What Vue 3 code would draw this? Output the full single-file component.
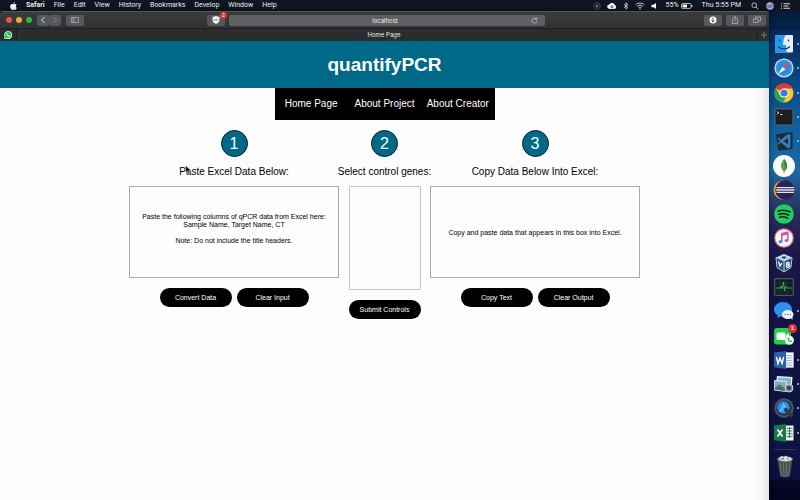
<script setup>
import { ref } from 'vue'

const menus = ['File', 'Edit', 'View', 'History', 'Bookmarks', 'Develop', 'Window', 'Help']
const links = ['Home Page', 'About Project', 'About Creator']
const input = ref(
  'Paste the following columns of qPCR data from Excel here:\nSample Name, Target Name, CT\n\nNote: Do not include the title headers.'
)
const output = ref('Copy and paste data that appears in this box into Excel.')
const controls = ref([])

function copyText() {
  navigator.clipboard?.writeText(output.value)
}
</script>

<template>
  <div class="desktop">
    <header class="menubar">
      <svg class="apple" viewBox="0 0 14 16" aria-hidden="true">
        <path fill="#fff" d="M9.6 0C9.8 1.800 8.500 3.700 6.800 3.800 6.500 2.100 8 .3 9.600 0ZM7 4.700C7.800 4.700 8.600 4 10 4c1.300 0 2.500.7 3.200 1.700-2.500 1.500-2.100 4.900.5 5.900C13 13.600 11.600 16 10.100 16c-1.100 0-1.500-.7-2.900-.7S5.300 16 4.300 16C2.300 16 .3 12.300.3 9 .3 5.900 2.100 4.100 4.200 4.100 5.400 4.100 6.300 4.700 7 4.700Z" />
      </svg>
      <strong>Safari</strong>
      <span v-for="m in menus" :key="m">{{ m }}</span>
      <div class="status">
        <div class="indicators">
          <svg width="8" height="8" viewBox="0 0 16 16"><circle cx="8" cy="8" r="6.500" fill="none" stroke="#555a63" stroke-width="1.500" /><circle cx="8" cy="8" r="3" fill="#6a6f78" /></svg>
          <svg width="10" height="8" viewBox="0 0 20 16"><path fill="#fff" d="M5 14a4.500 4.500 0 0 1-.5-9A6 6 0 0 1 15.500 6 4.200 4.200 0 0 1 15.500 14Z" /><path d="M10 6v5M7.500 9l2.500 2.500L12.500 9" stroke="#151a28" stroke-width="1.600" fill="none" /></svg>
          <svg width="6" height="8" viewBox="0 0 12 16"><path d="M2 4.500 10 11 6 14.500V1.500L10 5 2 11.500" fill="none" stroke="#eee" stroke-width="1.500" /></svg>
          <svg width="10" height="8" viewBox="0 0 20 16"><path d="M1.500 5.500a12 12 0 0 1 17 0M4.500 8.500a8 8 0 0 1 11 0M7.300 11.400a4 4 0 0 1 5.400 0" fill="none" stroke="#ddd" stroke-width="1.800" /><circle cx="10" cy="14" r="1.500" fill="#ddd" /></svg>
          <svg width="6" height="8" viewBox="0 0 12 16"><path d="M1 5.500h4L10 2v12L5 10.500H1Z" fill="#fff" /></svg>
        </div>
        <span class="battery">55%
          <svg width="12" height="8" viewBox="0 0 24 16"><rect x="1" y="3" width="19" height="10" rx="2" fill="none" stroke="#ddd" stroke-width="1.600" /><path d="M3 5h9v6H3Z" fill="#fff" /><path d="M22 6v4" stroke="#ddd" stroke-width="2" /></svg>
        </span>
        <span class="clock">Thu 5:55 PM</span>
        <svg width="8" height="8" viewBox="0 0 16 16"><circle cx="6.500" cy="6.500" r="4.700" fill="none" stroke="#ddd" stroke-width="1.600" /><path d="m10 10 5 5" stroke="#ddd" stroke-width="1.800" /></svg>
        <svg width="8" height="8" viewBox="0 0 16 16"><circle cx="8" cy="8" r="7.500" fill="#aab4d8" /><path d="M1 7c3-5 5 5 8 0s4-2 6 0" stroke="#e04f8c" stroke-width="2.500" fill="none" /><path d="M2 10c3-3 5 3 7 0s4-2 5 0" stroke="#2676e8" stroke-width="2.500" fill="none" /></svg>
        <svg width="9" height="8" viewBox="0 0 18 16"><path d="M0 3.500h2M5 3.500h13M0 8h2M5 8h10M0 12.500h2M5 12.500h13" stroke="#eee" stroke-width="1.800" /></svg>
      </div>
    </header>

    <div class="workspace">
      <div class="window">
        <div class="toolbar">
          <div class="side">
            <i class="light red"></i><i class="light yellow"></i><i class="light green"></i>
            <div class="history">
              <button class="tool" aria-label="Back"><svg width="6" height="8" viewBox="0 0 6 8"><path d="M4.500 1 1.500 4l3 3" fill="none" stroke="#ddd" /></svg></button>
              <button class="tool" aria-label="Forward"><svg width="6" height="8" viewBox="0 0 6 8"><path d="m1.500 1 3 3-3 3" fill="none" stroke="#85878a" /></svg></button>
            </div>
            <button class="tool wide" aria-label="Sidebar"><svg width="8" height="6" viewBox="0 0 16 12"><path d="M1 1h14v10H1ZM6 1v10M2.500 3.500h2M2.500 6h2M2.500 8.500h2" fill="none" stroke="#b5b7ba" stroke-width="1.400" /></svg></button>
          </div>
          <div class="address-group">
            <button class="tool wide shield" aria-label="Blocked content">
              <svg width="8" height="8" viewBox="0 0 16 16"><path d="M8 0 15 2v6c0 4-3 6.500-7 8-4-1.500-7-4-7-8V2Z" fill="#f2f2f2" /><path d="M4 6v3h2V6m2 0v3h2V6m2 0v3" fill="none" stroke="#85888b" stroke-width="1.200" /></svg>
              <span class="count">2</span>
            </button>
            <div class="address">
              localhost
              <svg class="reload" width="7" height="7" viewBox="0 0 14 14"><path d="M11.500 5A5 5 0 1 0 12 8M12 1v4H8" fill="none" stroke="#ccc" stroke-width="1.400" /></svg>
            </div>
          </div>
          <div class="side end">
            <button class="tool wide" aria-label="Downloads"><svg width="8" height="8" viewBox="0 0 16 16"><circle cx="8" cy="8" r="7" fill="#fff" /><path d="M8 3.500V12M5 9l3 3 3-3" fill="none" stroke="#444" stroke-width="1.800" /></svg></button>
            <button class="tool wide" aria-label="Share"><svg width="8" height="8" viewBox="0 0 16 16"><path d="M5 6H3v9h10V6h-2M8 11V1M5 4l3-3 3 3" fill="none" stroke="#bbb" stroke-width="1.500" /></svg></button>
            <button class="tool wide" aria-label="Show tabs"><svg width="8" height="8" viewBox="0 0 16 16"><path d="M1 6h9v7H1ZM5 6V2h10v8h-5" fill="none" stroke="#bbb" stroke-width="1.500" /></svg></button>
          </div>
        </div>

        <div class="tabs">
          <div class="pinned">
            <svg width="8" height="8" viewBox="0 0 16 16"><path d="M0 16 1.200 11.500A8 8 0 1 1 4.500 15Z" fill="#f2fff5" /><path d="m1.800 14.300.9-3.200a6.500 6.500 0 1 1 2.400 2.300Z" fill="#22c258" /><path d="M5 4.200c1-.8 1.500 0 2 1.500-.4.700-.9.900-.3 1.600.8 1.200 1.500 1.600 2.400 2 .6-.2.900-1.300 1.500-1 .9.400 1.700.7 1.500 1.200-.3 1.700-1.900 2-3.400 1.500C6.500 10.200 3.500 7.200 5 4.200Z" fill="#fff" /></svg>
          </div>
          <span class="tab">Home Page</span>
          <button class="newtab" aria-label="New tab"><svg width="6" height="6" viewBox="0 0 6 6"><path d="M3 0v6M0 3h6" stroke="#77797c" /></svg></button>
        </div>

        <div class="page">
          <div class="banner"><h1>quantifyPCR</h1></div>
          <nav>
            <a v-for="l in links" :key="l" href="#">{{ l }}</a>
          </nav>
          <main>
            <section>
              <span class="step">1</span>
              <h2><label for="paste">Paste Excel Data Below:</label></h2>
              <textarea id="paste" v-model="input" class="source" spellcheck="false"></textarea>
              <div class="actions">
                <button class="pill">Convert Data</button>
                <button class="pill" @click="input = ''">Clear Input</button>
              </div>
            </section>
            <section>
              <span class="step">2</span>
              <h2><label for="genes">Select control genes:</label></h2>
              <select id="genes" v-model="controls" multiple></select>
              <div class="actions">
                <button class="pill">Submit Controls</button>
              </div>
            </section>
            <section>
              <span class="step">3</span>
              <h2><label for="result">Copy Data Below Into Excel:</label></h2>
              <textarea id="result" v-model="output" class="result" spellcheck="false"></textarea>
              <div class="actions">
                <button class="pill" @click="copyText">Copy Text</button>
                <button class="pill" @click="output = ''">Clear Output</button>
              </div>
            </section>
          </main>
        </div>
      </div>

      <aside class="dock">
        <ul>
          <li class="running"><svg viewBox="0 0 20 20"><rect x="1" y="1" width="18" height="17.500" rx="1" fill="#e6eef6" /><path d="M1 1h10.500C9.500 4.500 9 8 9 11h3c0 3 .3 5 1 7.500H1Z" fill="#1f9cf0" /><path d="M5.500 5.500v2M14.500 5.500v2" stroke="#12304f" stroke-width="1.200" /><path d="M4 12.500c3.500 3.300 8.500 3.300 12 0" fill="none" stroke="#12304f" stroke-width="1.100" /></svg></li>
          <li class="running"><svg viewBox="0 0 20 20"><circle cx="10" cy="10" r="9.600" fill="#d5dde4" /><circle cx="10" cy="10" r="8.300" fill="#238ee0" /><circle cx="10" cy="10" r="7.200" fill="none" stroke="#a9d8ff" stroke-width="1" stroke-dasharray=".5 1.300" /><path d="m16 4-4.700 7.400-2.600-2.700Z" fill="#f0443c" /><path d="m4 16 4.700-7.300 2.600 2.700Z" fill="#fff" /></svg></li>
          <li class="running"><svg viewBox="0 0 20 20"><circle cx="10" cy="10" r="9.500" fill="#fbc92e" /><path d="M10 10 1.800 5.200A9.500 9.500 0 0 1 18.300 5.500H10Z" fill="#e2392c" /><path d="M1.800 5.200A9.500 9.500 0 0 0 9 19.450L13.500 12 10 10 6.200 12.200Z" fill="#2fa14f" /><circle cx="10" cy="10" r="4.600" fill="#fff" /><circle cx="10" cy="10" r="3.600" fill="#3b7de8" /></svg></li>
          <li class="running"><svg viewBox="0 0 20 20"><rect x="1" y="2" width="18" height="16" rx="1" fill="#1c1e20" stroke="#60676d" /><path d="m3 4.500 2 1.300L3 7.200M6 7.500h2.500" fill="none" stroke="#ddd" stroke-width=".9" /></svg></li>
          <li class="running"><svg viewBox="0 0 20 20"><path d="m2 3.500 10-1.800 6.500-.4V18L5.500 19.500 4 18Z" fill="#222831" /><path d="m14 3 2.500 1v12L14 17.500 7 11.500 4.500 13.500 3.500 12.500 6 10 3.500 7.500 4.500 6.500 7 8.500ZM14 7l-4.500 3 4.500 3.500Z" fill="#2e7fbd" fill-rule="evenodd" /></svg></li>
          <li><svg viewBox="0 0 20 20" overflow="visible"><circle cx="10" cy="10" r="11" fill="#fcfdfa" /><path d="M10 3C14.800 8 13.500 13 10 15.500 6.500 13 5.500 8 10 3Z" fill="#53a94a" /><path d="M10 3C14.800 8 13.500 13 10 15.500Z" fill="#3c8d3d" /><path d="M10 10v7.500" stroke="#a88b62" stroke-width=".9" /></svg></li>
          <li><svg viewBox="0 0 20 20" overflow="visible"><circle cx="9" cy="10" r="9.500" fill="#f29a38" /><circle cx="11" cy="10" r="9.700" fill="#2b2256" /><path d="M2.500 7.700h17.500M2 10h18.500M2.500 12.300h17.500" stroke="#e5e5ee" stroke-width="1.300" /></svg></li>
          <li><svg viewBox="0 0 20 20"><circle cx="10" cy="10" r="9.800" fill="#1fd05e" /><path d="M4.200 7c4-1.300 8.500-.8 12 1M4.800 10.200c3.500-1 7-.6 10 1M5.500 13.200c3-.8 5.500-.5 8.200.9" fill="none" stroke="#0e2417" stroke-width="1.600" stroke-linecap="round" /></svg></li>
          <li><svg viewBox="0 0 20 20"><circle cx="10" cy="10" r="9.800" fill="#f0707c" /><circle cx="10" cy="10" r="8.600" fill="#fdfbff" /><path d="M7.800 13.500V5.500l6-1.300v8" fill="none" stroke="#bc50d8" stroke-width="1.500" /><path d="M7.800 6.800 13.800 5.500" stroke="#f04c68" stroke-width="1.900" /><ellipse cx="6.500" cy="13.700" rx="2" ry="1.600" fill="#3c92f2" /><ellipse cx="12.500" cy="12.500" rx="2" ry="1.600" fill="#ae58df" /></svg></li>
          <li><svg viewBox="0 0 20 20"><path d="m10 1 8 3.500-1 10L10 19l-7-4.500-1-10Z" fill="#264f86" /><path d="m10 1 8 3.500L10 8 2 4.500Z" fill="#d0dce9" /><path d="M10 8v11M2 4.500 3 14.500 10 19l7-4.500 1-10L10 8Z" fill="none" stroke="#b6c8dc" /><path d="m4.500 8.500 1.500 4.500 1.800-3M12.500 9.500v5M12.500 10c3-1.600 3.500 1 1 2 3-.5 2.500 2-.5 2.500" fill="none" stroke="#fff" stroke-width="1.300" /><path d="m7 4.500 3-1.500 3 1.500L10 6Z" fill="#284b7a" /></svg></li>
          <li><svg viewBox="0 0 20 20"><rect x=".7" y="1.700" width="18.600" height="16.600" rx="1" fill="#10201c" stroke="#50565c" stroke-width="1.200" /><path d="M1 6h18M1 14h18M6 2v16M12 2v16" stroke="#24443a" stroke-width=".5" /><path d="M2 11h4l1-2 1 3 1.500-7 1 9 1-5 1 2h5.500" fill="none" stroke="#3fb98d" stroke-width=".8" /></svg></li>
          <li class="running"><svg viewBox="0 0 20 20"><path d="M9 1c5 0 9 3.300 9 7.500S14 16 9 16c-1 0-2-.1-3-.4L2.500 17 4 14.500C1.500 13 0 11 0 8.500 0 4.300 4 1 9 1Z" fill="#2d91f2" /><ellipse cx="13.700" cy="13.500" rx="5.800" ry="4.600" fill="#eaf4ff" /><path d="m16 17 3 1.500-1-3Z" fill="#eaf4ff" /><path d="M11.200 13.500h.1M13.700 13.500h.1M16.200 13.500h.1" stroke="#567aa5" stroke-width="1.400" stroke-linecap="round" /></svg></li>
          <li><svg viewBox="0 0 20 20"><rect x="0" y="2" width="17" height="16.500" rx="3" fill="#21cf45" /><rect x="2.500" y="6.500" width="9" height="7.500" rx="1.500" fill="#fff" /><path d="m12 9.500 3-2.500v6l-3-2.300Z" fill="#fff" /><circle cx="15.400" cy="14.200" r="4.500" fill="#eaffed" /><path d="M13.500 12c0 2 1.500 4 4 4.200l.6-1.200-1.200-.8-.8.600-1.300-1.500.5-.8-.7-1.200Z" fill="#20ad45" /></svg><b class="badge">1</b></li>
          <li class="running"><svg viewBox="0 0 20 20"><path d="M10 2.500h9.500v15H10Z" fill="#f2f5fa" stroke="#b9c7da" stroke-width=".5" /><path d="M12 5.500h6M12 8h6M12 10.500h6M12 13h6M12 15.300h6" stroke="#809bc4" stroke-width=".7" /><path d="M0 2.500 12 1v18L0 17.200Z" fill="#2b5fab" /><path d="m2.500 7 1.500 6.500L6 8l2 5.500L9.700 7" fill="none" stroke="#fff" stroke-width="1.400" /></svg></li>
          <li class="running"><svg viewBox="0 0 20 20"><path d="m3 2 15.500 1-1 13L1 15Z" fill="#f2f2ee" /><path d="m4 3.500 13 .8-.7 10L2.500 13.500Z" fill="#79b5e5" /><path d="m3 9 4-2 4 2 5.500-1-.3 6L2.500 14Z" fill="#b59a6a" /><path d="m.5 6.500 12 1-.8 10L.2 16Z" fill="#7ea9c7" stroke="#fff" stroke-width=".8" /><path d="M1 13.500 6 10.500l3 3 2.800-1.500-.5 5L.800 15.600Z" fill="#4d6e63" /><circle cx="15" cy="14" r="4" fill="#71828e" stroke="#d7dfe5" /><circle cx="15" cy="14" r="1.800" fill="#2c3843" /></svg></li>
          <li class="running"><svg viewBox="0 0 20 20"><circle cx="10" cy="10" r="9.700" fill="#51565d" /><circle cx="10" cy="10" r="7.600" fill="#18283d" /><circle cx="9.500" cy="9.500" r="6.300" fill="#238df4" /><path d="M5 14 9.500 4l4.500 8Z" fill="#61b5ff" /><path d="m10.500 10.500 8 8" stroke="#353b43" stroke-width="3.600" /></svg></li>
          <li class="running"><svg viewBox="0 0 20 20"><path d="M10 2.500h9.500v15H10Z" fill="#f1f7f3" /><path d="M12.500 5.300h6M12.500 8h6M12.500 10.700h6M12.500 13.400h6M15.500 4v11" stroke="#34885b" stroke-width="1" /><path d="M0 2.500 12 1v18L0 17.200Z" fill="#187845" /><path d="m3.500 6.500 5 7M8.500 6.500l-5 7" stroke="#fff" stroke-width="1.700" /></svg></li>
        </ul>
        <div class="trash"><svg viewBox="0 0 20 24"><path d="M2.500 4 5 21c2 1.700 8 1.700 10 0L17.500 4Z" fill="#4c5053" /><path d="m5 7 1.800 14M8.500 8l.5 14M11.700 8l-.5 14M15 7l-1.800 14" stroke="#777d81" stroke-width=".7" /><ellipse cx="10" cy="4" rx="7.800" ry="2.800" fill="#8f9598" /><path d="m4 4 2-3 3 1 2-1.500 2 2 3 .3.500 2c-3 2-9 2-12.500-.8Z" fill="#dcdfe1" /><path d="m6 4 2-1 1 2M12 3l1.500 1.500" stroke="#667178" fill="none" /></svg></div>
      </aside>
    </div>

    <svg class="cursor" viewBox="0 0 8 12" aria-hidden="true"><path d="M.5.5v9l2.200-2 1.600 3.700 1.500-.7-1.600-3.500h3Z" fill="#000" stroke="#fff" stroke-width=".6" /></svg>
  </div>
</template>

<style>
html, body, #app { height: 100%; }
body { margin: 0; }
</style>

<style scoped>
* { box-sizing: border-box; }
svg { display: block; flex: none; }
button { border: 0; padding: 0; font-family: inherit; cursor: pointer; }
.desktop {
  position: relative;
  display: flex;
  flex-direction: column;
  min-height: 100%;
  font-family: "Liberation Sans", Arial, sans-serif;
  background: linear-gradient(#03162f, #05244a 6%, #084a85 16%, #0b68a5 25%, #1a78a8 34%, #25557f 38%, #2b2850 43%, #1f0f3c 51%, #110b36 60%, #0c0932 90%, #040420);
}
.menubar {
  display: flex;
  align-items: center;
  gap: 9px;
  height: 11px;
  padding: 0 10px;
  background: #101522;
  color: #f0f0f2;
  font: 7px/11px Roboto, sans-serif;
}
.apple { width: 7px; height: 8px; }
.status { display: flex; align-items: center; gap: 7px; margin-left: auto; }
.indicators { display: flex; gap: 6px; margin-right: 2px; }
.battery { display: flex; align-items: center; gap: 2px; }
.clock { margin: 0 3px 0 2px; }
.workspace { display: flex; flex: 1; }
.window {
  display: flex;
  flex: 1;
  flex-direction: column;
  min-width: 0;
  border-radius: 3px 3px 0 0;
  overflow: hidden;
  box-shadow: 0 0 6px #0008;
}
.toolbar {
  display: grid;
  grid-template-columns: 201fr 338fr 221fr;
  align-items: center;
  height: 17px;
  padding: 0 3px 0 6px;
  border-top: 1px solid #55575a;
  background: linear-gradient(#393b3d, #303234);
}
.side { display: flex; align-items: center; gap: 4px; }
.end { justify-content: flex-end; }
.light { width: 6px; height: 6px; border-radius: 50%; }
.red { background: #ec5149; }
.yellow { background: #efae32; }
.green { background: #2dbd38; }
.history { display: flex; margin: 0 1px 0 1px; }
.tool {
  display: flex;
  align-items: center;
  justify-content: center;
  width: 12px;
  height: 11px;
  border-radius: 2px;
  background: #56585b;
}
.wide { width: 18px; }
.address-group { display: flex; gap: 4px; }
.shield { position: relative; }
.count {
  position: absolute;
  top: -3px;
  right: -2px;
  width: 7px;
  height: 7px;
  border-radius: 50%;
  background: #e6302d;
  color: #fff;
  font-size: 5px;
  line-height: 7px;
}
.address {
  position: relative;
  flex: 1;
  height: 11px;
  padding-right: 4px;
  border-radius: 2px;
  background: #5d5f62;
  color: #f2f2f2;
  font: 6px/11px Inter, sans-serif;
  text-align: center;
}
.reload { position: absolute; top: 2px; right: 7px; }
.tabs {
  display: flex;
  height: 13px;
  border-top: 1px solid #1d1f21;
  background: #2a2c2e;
  color: #eee;
  font: 6px/12px Inter, sans-serif;
}
.pinned { display: flex; align-items: center; justify-content: center; width: 17px; border-right: 1px solid #1b1c1e; }
.tab { flex: 1; padding-right: 6px; text-align: center; }
.newtab { display: flex; align-items: center; justify-content: center; width: 12px; border-left: 1px solid #1b1c1e; background: none; }
.page {
  display: flex;
  flex: 1;
  flex-direction: column;
  align-items: center;
  background: linear-gradient(to left, #e4e4e4, #f6f6f6 7px, #fdfdfd 16px);
}
.banner { align-self: stretch; background: #006987; }
h1 { margin: 0; color: #fff; font-size: 19px; line-height: 47px; text-align: center; }
nav { display: grid; grid-template-columns: repeat(3, 1fr); width: 220px; background: #000; }
nav a { color: #fff; font-size: 10px; line-height: 32px; text-align: center; text-decoration: none; white-space: nowrap; }
main { display: grid; grid-template-columns: 210px 91px 210px; padding-top: 10px; }
section { display: flex; flex-direction: column; align-items: center; }
.step {
  width: 27px;
  height: 27px;
  border: 1px solid #0c1a24;
  border-radius: 50%;
  background: #006987;
  color: #fff;
  font-size: 16px;
  line-height: 25px;
  text-align: center;
}
h2 { margin: 9px 0 8px; font-size: 10px; font-weight: 400; line-height: 12px; white-space: nowrap; }
textarea {
  display: block;
  width: 100%;
  height: 92px;
  border: 1px solid #aaa;
  background: #fdfdfd;
  color: #000;
  font: 7px/8px "Liberation Sans", Arial, sans-serif;
  text-align: center;
  resize: none;
  overflow: hidden;
}
.source { padding: 26px 4px 0; }
.result { padding: 42px 4px 0; }
select {
  appearance: none;
  width: 72px;
  height: 104px;
  border: 1px solid #c4c4c4;
  border-radius: 1px;
  background: #fdfdfd;
}
.actions { display: flex; gap: 5px; margin-top: 10px; }
.pill { width: 72px; height: 19px; border-radius: 10px; background: #000; color: #fff; font-size: 7px; }
.dock {
  display: flex;
  flex-direction: column;
  width: 30px;
  margin: 19px 0 20px 1px;
  padding: 2px 0 1px;
  border-radius: 3px 0 0 3px;
  background: #1a3a8033;
}
ul {
  display: flex;
  flex: 1;
  flex-direction: column;
  justify-content: space-around;
  margin: 0;
  padding: 0 0 0 4px;
  list-style: none;
}
li { position: relative; display: flex; height: 20px; }
li svg { width: 20px; height: 20px; }
.running::after { content: ""; align-self: center; width: 2px; height: 2px; margin-left: 3px; border-radius: 50%; background: #a9c9ea; }
.badge {
  position: absolute;
  top: -2px;
  left: 14px;
  width: 9px;
  height: 9px;
  border-radius: 50%;
  background: #ee2b30;
  color: #fff;
  font-size: 6px;
  line-height: 9px;
  text-align: center;
}
.trash { margin: 4px 4px 0; padding: 5px 0 0 1px; border-top: 1px solid #34345a; }
.trash svg { width: 20px; height: 24px; }
.cursor { position: absolute; top: 165px; left: 185px; width: 7px; height: 10px; }
</style>
